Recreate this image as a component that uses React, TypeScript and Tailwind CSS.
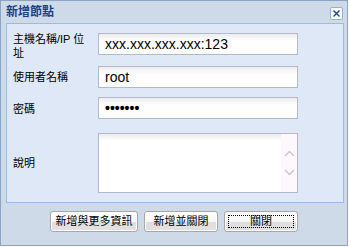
import React from "react";

const cjk = '"Liberation Sans", "Noto Sans CJK TC", sans-serif';

function Field({ children, className = "" }: { children?: React.ReactNode; className?: string }) {
  return (
    <div
      className={`w-[200px] h-[22px] border border-[#b5b8c8] bg-[linear-gradient(to_bottom,#ececec,#ffffff_7px)] flex items-center pl-[6px] text-[14px] text-black ${className}`}
      style={{ fontFamily: '"Liberation Sans", sans-serif' }}
    >
      {children}
    </div>
  );
}

function Btn({ label, w, focus = false }: { label: string; w: string; focus?: boolean }) {
  return (
    <div
      className={`${w} h-[21px] rounded-[3px] border border-[#a7a7a7] bg-[linear-gradient(to_bottom,#ffffff_0%,#f6f6f6_50%,#dedede_52%,#e2e2e2_100%)] flex items-center justify-center p-[3px] shadow-[inset_0_0_0_1px_#ffffff]`}
    >
      <div
        className={`w-full h-full flex items-center justify-center text-[11px] text-black ${focus ? "border border-dotted border-black" : ""}`}
      >
        {label}
      </div>
    </div>
  );
}

export default function App() {
  return (
    <div className="w-[350px] h-[247px] bg-white" style={{ fontFamily: cjk }}>
      <div className="w-[348px] h-[246px] border border-[#8ea3bf] bg-[#cedae8] flex flex-col">
        <div className="h-[22px] flex items-center justify-between pl-[5px] pr-[4px]">
          <span className="text-[12px] font-bold text-[#15428b] leading-none mt-[-1px]">新增節點</span>
          <div className="w-[13px] h-[13px] mt-[3px] rounded-[2px] border border-[#8fb0dc] bg-white flex items-center justify-center">
            <svg width="9" height="9" viewBox="0 0 9 9">
              <path d="M1.5 1.5 L7.5 7.5 M7.5 1.5 L1.5 7.5" stroke="#15428b" strokeWidth="1.4" fill="none" />
            </svg>
          </div>
        </div>
        <div className="ml-[5px] w-[338px] h-[180px] border border-[#99bbe8] bg-[#dfe8f6] pt-[9px] pl-[6px] text-[11px] text-black">
          <div className="flex items-center h-[22px]">
            <div className="w-[85px] leading-[14px] pt-[4px]">
              主機名稱/IP 位<br />址
            </div>
            <Field>xxx.xxx.xxx.xxx:123</Field>
          </div>
          <div className="flex items-center h-[22px] mt-[11px]">
            <div className="w-[85px]">使用者名稱</div>
            <Field>root</Field>
          </div>
          <div className="flex items-center h-[22px] mt-[9px]">
            <div className="w-[85px] pt-[2px]">密碼</div>
            <Field className="font-bold">•••••••</Field>
          </div>
          <div className="flex items-center h-[60px] mt-[14px]">
            <div className="w-[85px]">說明</div>
            <div className="w-[200px] h-[60px] border border-[#b5b8c8] bg-[linear-gradient(to_bottom,#ececec,#ffffff_7px)] flex justify-end">
              <div className="w-[16px] h-full bg-[#fcf8fc] flex flex-col items-center justify-center gap-[12px]">
                <svg width="11" height="7" viewBox="0 0 11 7">
                  <path d="M1 6 L5.5 1.5 L10 6" stroke="#c8c8c8" strokeWidth="1.5" fill="none" />
                </svg>
                <svg width="11" height="7" viewBox="0 0 11 7">
                  <path d="M1 1 L5.5 5.5 L10 1" stroke="#c8c8c8" strokeWidth="1.5" fill="none" />
                </svg>
              </div>
            </div>
          </div>
        </div>
        <div className="flex justify-center gap-[6px] mt-[8px]">
          <Btn label="新增與更多資訊" w="w-[88px]" />
          <Btn label="新增並關閉" w="w-[74px]" />
          <Btn label="關閉" w="w-[74px]" focus />
        </div>
      </div>
    </div>
  );
}
